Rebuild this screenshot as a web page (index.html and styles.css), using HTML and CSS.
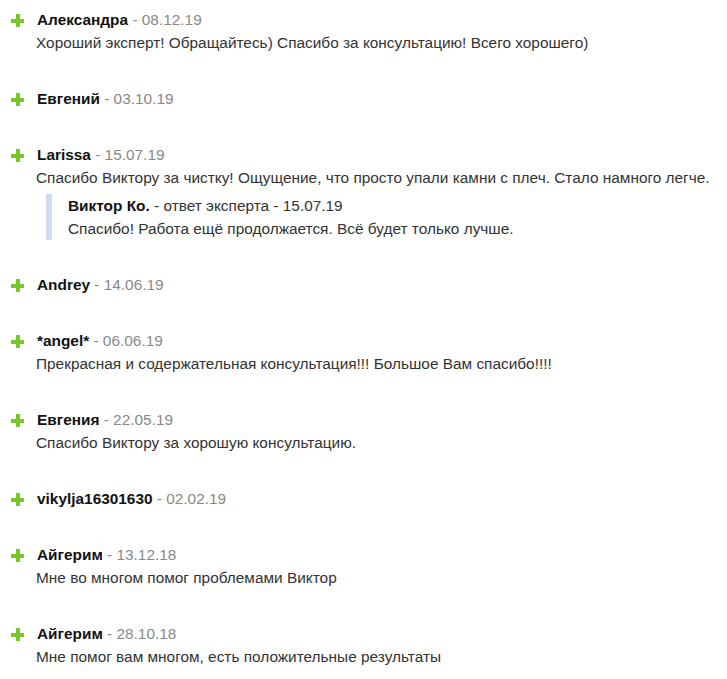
FILE: index.html
```html
<!DOCTYPE html>
<html lang="ru">
<head>
<meta charset="utf-8">
<link rel="stylesheet" href="styles.css">
</head>
<body>
<div class="reviews">
  <div class="review">
    <div class="head"><span class="plus"></span><b class="name">Александра</b> <span class="date">- 08.12.19</span></div>
    <div class="text">Хороший эксперт! Обращайтесь) Спасибо за консультацию! Всего хорошего)</div>
  </div>
  <div class="review">
    <div class="head"><span class="plus"></span><b class="name">Евгений</b> <span class="date">- 03.10.19</span></div>
  </div>
  <div class="review">
    <div class="head"><span class="plus"></span><b class="name">Larissa</b> <span class="date">- 15.07.19</span></div>
    <div class="text">Спасибо Виктору за чистку! Ощущение, что просто упали камни с плеч. Стало намного легче.</div>
    <div class="reply">
      <div class="reply-head"><b class="name">Виктор Ко.</b> - ответ эксперта - 15.07.19</div>
      <div class="text">Спасибо! Работа ещё продолжается. Всё будет только лучше.</div>
    </div>
  </div>
  <div class="review">
    <div class="head"><span class="plus"></span><b class="name">Andrey</b> <span class="date">- 14.06.19</span></div>
  </div>
  <div class="review">
    <div class="head"><span class="plus"></span><b class="name">*angel*</b> <span class="date">- 06.06.19</span></div>
    <div class="text">Прекрасная и содержательная консультация!!! Большое Вам спасибо!!!!</div>
  </div>
  <div class="review">
    <div class="head"><span class="plus"></span><b class="name">Евгения</b> <span class="date">- 22.05.19</span></div>
    <div class="text">Спасибо Виктору за хорошую консультацию.</div>
  </div>
  <div class="review">
    <div class="head"><span class="plus"></span><b class="name">vikylja16301630</b> <span class="date">- 02.02.19</span></div>
  </div>
  <div class="review">
    <div class="head"><span class="plus"></span><b class="name">Айгерим</b> <span class="date">- 13.12.18</span></div>
    <div class="text">Мне во многом помог проблемами Виктор</div>
  </div>
  <div class="review">
    <div class="head"><span class="plus"></span><b class="name">Айгерим</b> <span class="date">- 28.10.18</span></div>
    <div class="text">Мне помог вам многом, есть положительные результаты</div>
  </div>
</div>
</body>
</html>
```
FILE: styles.css
```css
body {
  margin: 8px;
  background: #fff;
  font-family: "Liberation Sans", Arial, sans-serif;
  font-size: 15.4px;
  line-height: 23px;
  color: #333;
}
.reviews {
  padding-left: 28px;
}
.review {
  margin-bottom: 33px;
}
.head {
  position: relative;
  padding-left: 1px;
}
.plus {
  position: absolute;
  left: -25px;
  top: 6px;
  width: 13px;
  height: 13px;
  background:
    linear-gradient(#78c72a, #78c72a) center / 13px 4px no-repeat,
    linear-gradient(#78c72a, #78c72a) center / 4px 13px no-repeat;
}
.name {
  font-weight: bold;
  color: #111;
}
.date {
  color: #888;
}
.reply {
  margin: 5px 0 0 10px;
  border-left: 6px solid #cfdcf1;
  padding-left: 16px;
}
.reply-head {
  color: #333;
}
```
